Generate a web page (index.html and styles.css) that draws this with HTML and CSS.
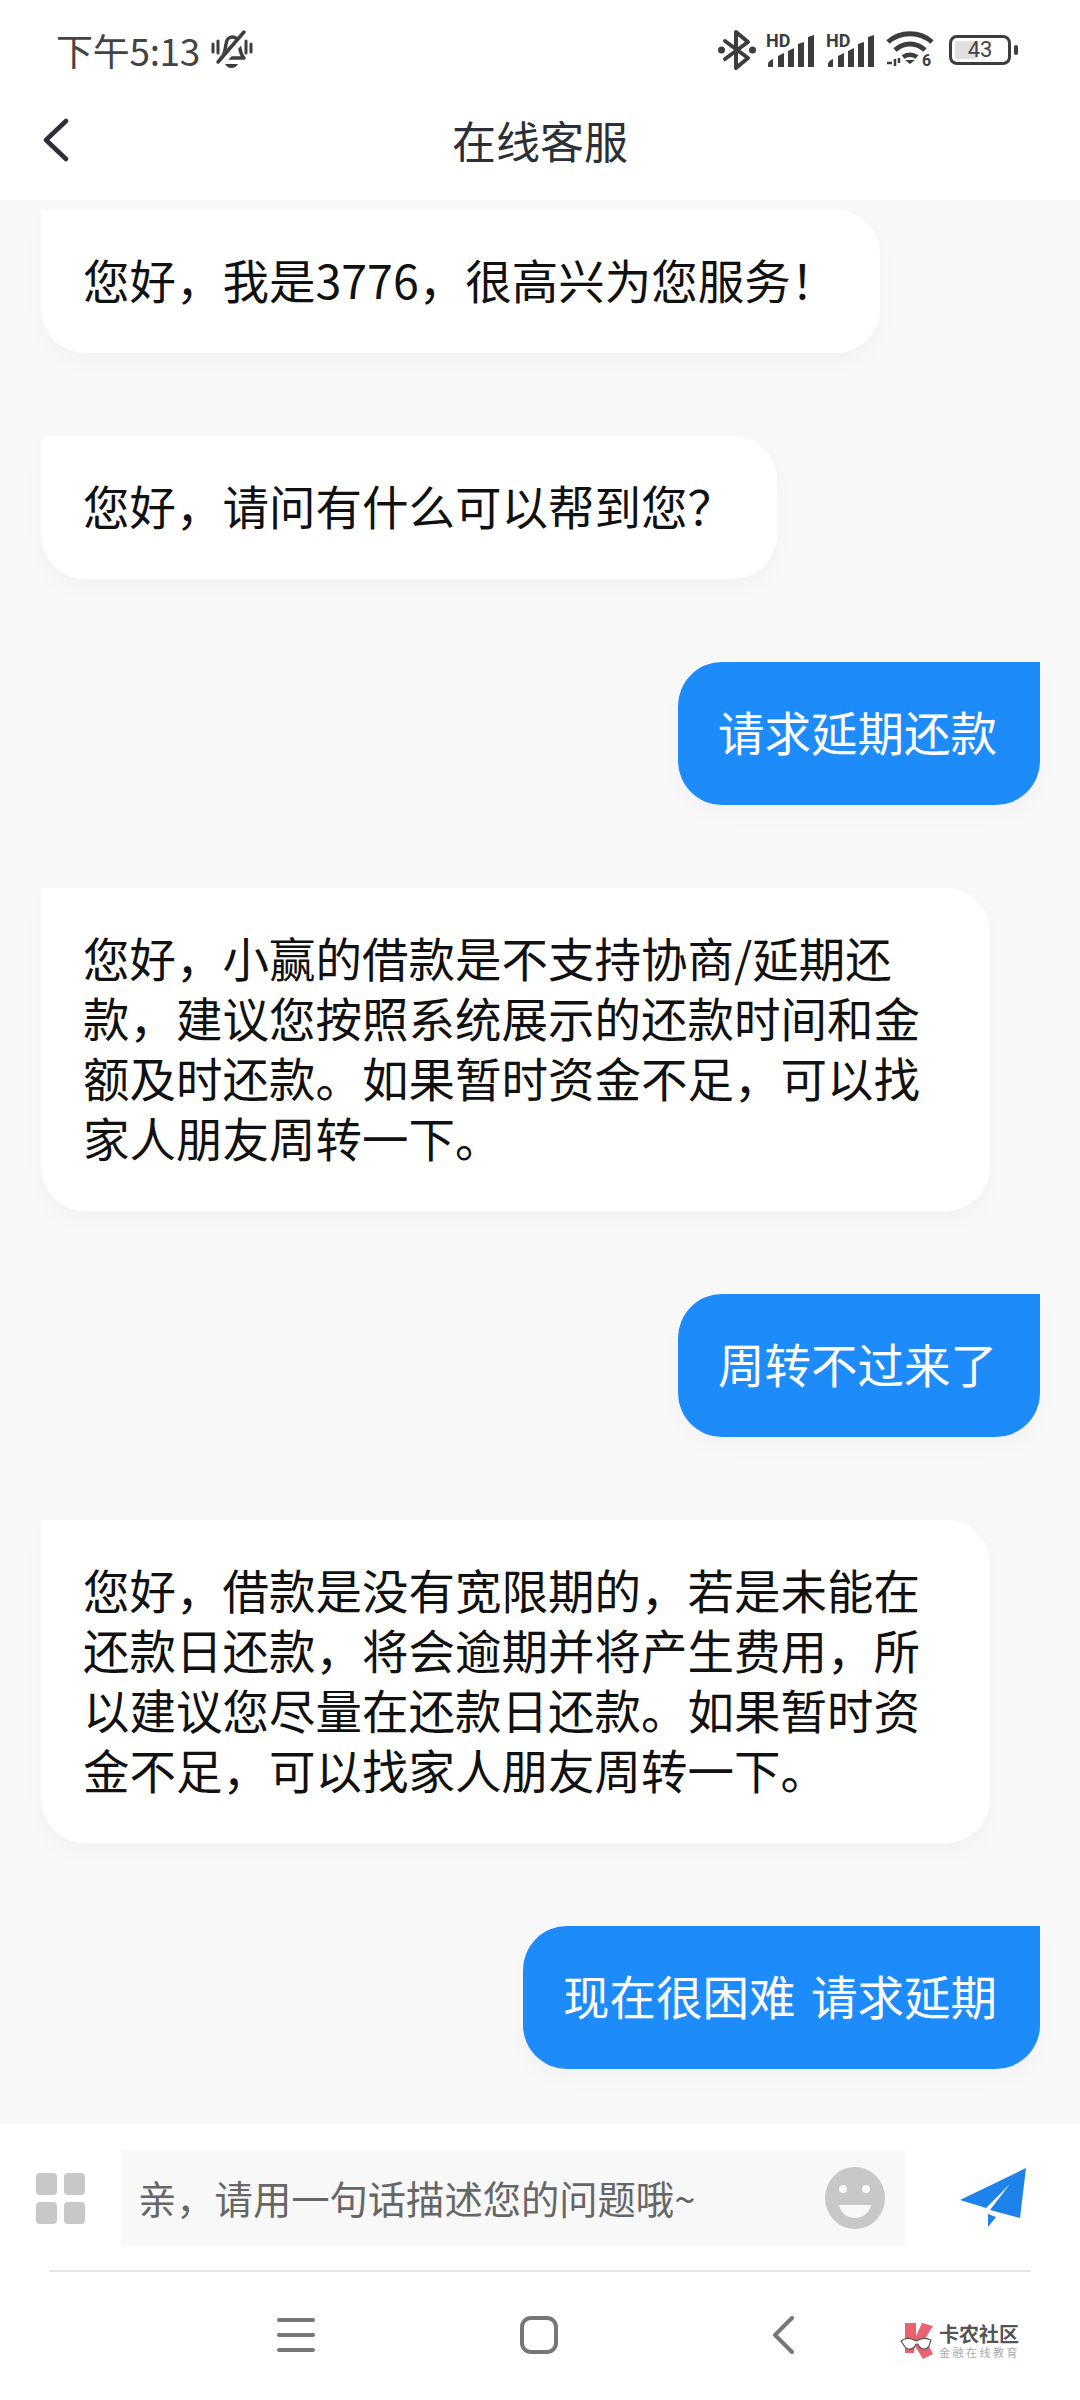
FILE: index.html
```html
<!DOCTYPE html>
<html lang="zh-CN">
<head>
  <meta charset="utf-8">
  <title>在线客服</title>
  <link rel="stylesheet" href="styles.css">
</head>
<body>
<div class="screen">
  <div class="status-bar">
    <div class="status-left">
      <span class="clock">下午5:13</span>
      <svg class="bell" width="44" height="42" viewBox="0 0 44 42" fill="none" stroke="#3d3d3d" stroke-width="3.500" stroke-linecap="round" stroke-linejoin="round">
        <path d="M12 29c4-3 4-8 5-14 .5-4 3-7 6-7s6 2 7 6c1 6 1 11 5 15z"/>
        <path d="M11 34 L37 5" stroke="#fff" stroke-width="8"/>
        <path d="M9 33 L35 3"/>
        <path d="M4 15v8M9 12v12M37 12v12M42 15v8" stroke-width="3"/>
        <path d="M16 35h13c-2 3-4 4-6.500 4s-4.500-1-6.500-4z" fill="#3d3d3d" stroke="none"/>
      </svg>
    </div>
    <div class="status-right">
      <svg class="bt" width="38" height="40" viewBox="0 0 38 40" fill="none" stroke="#3d3d3d" stroke-width="4" stroke-linejoin="round" stroke-linecap="round">
        <path d="M7 11 L30 28 L18 38 V2 L30 12 L7 29"/>
        <circle cx="3.500" cy="20" r="3.500" fill="#3d3d3d" stroke="none"/>
        <circle cx="34.500" cy="20" r="3.500" fill="#3d3d3d" stroke="none"/>
      </svg>
      <svg class="signal" width="50" height="36" viewBox="0 -2 50 36">
        <text x="0" y="13" class="hd">HD</text>
        <path d="M2 33v-3c0-2 2-4 5-5v8zM12 33V22l6-3v14zM22 33V17l6-3v19zM32 33V10l6-2v25zM42 33V3l6-2v32z" fill="#3d3d3d"/>
      </svg>
      <svg class="signal" width="50" height="36" viewBox="0 -2 50 36">
        <text x="0" y="13" class="hd">HD</text>
        <path d="M2 33v-3c0-2 2-4 5-5v8zM12 33V22l6-3v14zM22 33V17l6-3v19zM32 33V10l6-2v25zM42 33V3l6-2v32z" fill="#3d3d3d"/>
      </svg>
      <svg class="wifi" width="48" height="40" viewBox="0 0 48 40" fill="none" stroke="#3d3d3d" stroke-width="5">
        <path d="M2 12C14 1 34 1 46 12"/>
        <path d="M9 20C18 12 30 12 39 20"/>
        <path d="M17 27c4-3 10-3 14 0" stroke-width="4.500"/>
        <path d="M19 30h10l-5 4z" fill="#3d3d3d" stroke="none"/>
        <path d="M1 33h5M9 29v7M13 28v5" stroke-width="2.500"/>
        <text x="36" y="36" class="wifi-six">6</text>
      </svg>
      <div class="battery">
        <div class="battery-body">
          <div class="battery-fill"></div>
          <span class="battery-level">43</span>
        </div>
        <div class="battery-nub"></div>
      </div>
    </div>
  </div>

  <div class="header">
    <svg class="back" width="26" height="44" viewBox="0 0 26 44" fill="none" stroke="#2b2f38" stroke-width="4.500" stroke-linecap="round" stroke-linejoin="round">
      <path d="M23 3 L3 22 L23 41"/>
    </svg>
    <div class="title">在线客服</div>
  </div>

  <div class="chat">
    <div class="bubble agent">您好，我是3776，很高兴为您服务！</div>
    <div class="bubble agent">您好，请问有什么可以帮到您？</div>
    <div class="bubble user">请求延期还款</div>
    <div class="bubble agent wide">您好，小赢的借款是不支持协商/延期还款，建议您按照系统展示的还款时间和金额及时还款。如果暂时资金不足，可以找家人朋友周转一下。</div>
    <div class="bubble user">周转不过来了</div>
    <div class="bubble agent wide">您好，借款是没有宽限期的，若是未能在还款日还款，将会逾期并将产生费用，所以建议您尽量在还款日还款。如果暂时资金不足，可以找家人朋友周转一下。</div>
    <div class="bubble user">现在很困难 请求延期</div>
  </div>

  <div class="composer">
    <div class="grid-icon"><i></i><i></i><i></i><i></i></div>
    <div class="input">
      <span class="placeholder">亲，请用一句话描述您的问题哦~</span>
      <svg width="62" height="62" viewBox="0 0 62 62">
        <ellipse cx="31" cy="31" rx="30" ry="31" fill="#c8c8c8"/>
        <circle cx="19" cy="22" r="4" fill="#f8f8f8"/>
        <circle cx="42" cy="22" r="4" fill="#f8f8f8"/>
        <path d="M15 38h32c-2 9-9 13-16 13s-14-4-16-13z" fill="#f8f8f8"/>
      </svg>
    </div>
    <svg class="send" width="66" height="60" viewBox="0 0 66 60" fill="#1d82ea">
      <path d="M66 0 L0 32 L26 40 L50 16 L30 42 L60 50z"/>
      <path d="M28 46 L36 49 L28 59z"/>
    </svg>
  </div>

  <div class="nav">
    <div class="nav-buttons">
      <svg width="38" height="36" viewBox="0 0 38 36" fill="none" stroke="#777" stroke-width="4" stroke-linecap="round">
        <path d="M2 3h34M2 18h34M2 33h34"/>
      </svg>
      <svg width="38" height="38" viewBox="0 0 38 38" fill="none" stroke="#777" stroke-width="4">
        <rect x="2" y="2" width="34" height="34" rx="9"/>
      </svg>
      <svg class="nav-back" width="22" height="38" viewBox="0 0 22 38" fill="none" stroke="#777" stroke-width="4" stroke-linecap="round" stroke-linejoin="round">
        <path d="M20 2 L3 19 L20 36"/>
      </svg>
    </div>
    <div class="watermark">
      <svg width="36" height="38" viewBox="0 0 36 38">
        <path d="M5 1h11v13L22 1l11 3-8 13 8 15-10 5-8-13-1 7H5z" fill="#e8636f"/>
        <path d="M1 19c4-3 9-3 13-1 1 1 3 1 4 0 4-2 9-2 13 0l-2 6c-2 4-8 4-10 0-1-3-3-3-4 0-2 4-8 4-10 1z" fill="#fff" stroke="#555" stroke-width="1.200"/>
      </svg>
      <div class="watermark-text">
        <div class="watermark-name">卡农社区</div>
        <div class="watermark-sub">金融在线教育</div>
      </div>
    </div>
  </div>
</div>
</body>
</html>
```

FILE: styles.css
```css
html, body {
    margin: 0;
    padding: 0;
}

body {
    width: 1080px;
    height: 2400px;
    overflow: hidden;
    font-family: "Noto Sans CJK SC", "Noto Sans", sans-serif;
    color: #111;
    background: #fff;
}

.screen {
    display: flex;
    flex-direction: column;
    height: 2400px;
}

.status-bar {
    height: 100px;
    flex: none;
    display: flex;
    justify-content: space-between;
    align-items: center;
    padding: 0 62px 0 56px;
    box-sizing: border-box;
}

.status-left {
    display: flex;
    align-items: center;
    gap: 9px;
}

.clock {
    font-size: 37px;
    line-height: 44px;
    color: #444;
    letter-spacing: -0.3px;
}

.status-right {
    display: flex;
    align-items: center;
    gap: 10px;
}

.status-right svg {
    overflow: visible;
}

.hd {
    font-family: "Roboto", sans-serif;
    font-size: 18px;
    font-weight: 700;
    fill: #3d3d3d;
}

.wifi-six {
    font-family: "Roboto", sans-serif;
    font-size: 16px;
    font-weight: 700;
    fill: #3d3d3d;
    stroke: none;
}

.battery {
    display: flex;
    align-items: center;
    gap: 3px;
    margin-left: 5px;
}

.battery-body {
    position: relative;
    width: 62px;
    height: 30px;
    border: 3px solid #3d3d3d;
    border-radius: 8px;
    box-sizing: border-box;
    display: flex;
    align-items: center;
    justify-content: center;
}

.battery-fill {
    position: absolute;
    left: 3px;
    top: 3px;
    bottom: 3px;
    width: 23px;
    background: #e0e0e0;
    border-radius: 2px;
}

.battery-level {
    position: relative;
    font-family: "Roboto", sans-serif;
    font-size: 22px;
    line-height: 24px;
    color: #444;
}

.battery-nub {
    width: 4px;
    height: 10px;
    background: #3d3d3d;
    border-radius: 2px;
}

.header {
    position: relative;
    height: 100px;
    display: flex;
    align-items: center;
    justify-content: center;
    flex: none;
}

.back {
    position: absolute;
    left: 43px;
    top: 18px;
}

.title {
    font-size: 44px;
    line-height: 60px;
    color: #2b2f38;
    margin-top: -20px;
}

.chat {
    flex: none;
    height: 1924px;
    box-sizing: border-box;
    background: #f8f8f8;
    padding: 10px 40px 0 41px;
    display: flex;
    flex-direction: column;
    align-items: flex-start;
    gap: 83px;
    overflow: hidden;
}

.bubble {
    box-sizing: border-box;
    padding: 39px 43px 44px 42px;
    font-size: 46.500px;
    line-height: 60px;
    border-radius: 2px 44px 44px 44px;
    background: #fff;
    color: #111;
    box-shadow: 0 10px 22px rgba(0, 0, 0, 0.025);
    flex: none;
}

.bubble.wide {
    width: 949px;
}

.bubble.user {
    align-self: flex-end;
    background: #1e8bfb;
    color: #fff;
    border-radius: 44px 0 44px 44px;
    padding-left: 40px;
    word-spacing: 5px;
}

.composer {
    height: 146px;
    flex: none;
    display: flex;
    align-items: center;
    padding: 2px 54px 0 36px;
    box-sizing: border-box;
    background: #fff;
}

.grid-icon {
    width: 50px;
    display: grid;
    grid-template-columns: 21px 21px;
    gap: 7px;
    flex: none;
}

.grid-icon i {
    display: block;
    height: 22px;
    background: #c8c8c8;
    border-radius: 4px;
}

.input {
    width: 784px;
    height: 96px;
    margin-left: 35px;
    margin-right: 55px;
    background: #f8f8f8;
    display: flex;
    align-items: center;
    justify-content: space-between;
    padding: 0 19px 0 17px;
    box-sizing: border-box;
    flex: none;
}

.placeholder {
    font-size: 38.300px;
    line-height: 50px;
    color: #666;
}

.send {
    flex: none;
}

.nav {
    position: relative;
    flex: 1;
    margin: 0 50px;
    border-top: 2px solid #e6e6e6;
}

.nav-buttons {
    display: flex;
    align-items: center;
    padding: 44px 0 0 227px;
    gap: 205px;
}

.nav-back {
    margin-left: 9px;
}

.watermark {
    position: absolute;
    left: 850px;
    top: 50px;
    display: flex;
    align-items: center;
    gap: 3px;
}

.watermark-name {
    font-size: 20px;
    line-height: 22px;
    font-weight: 700;
    color: #555;
}

.watermark-sub {
    font-size: 11px;
    line-height: 14px;
    letter-spacing: 2.500px;
    color: #aaa;
}
```
